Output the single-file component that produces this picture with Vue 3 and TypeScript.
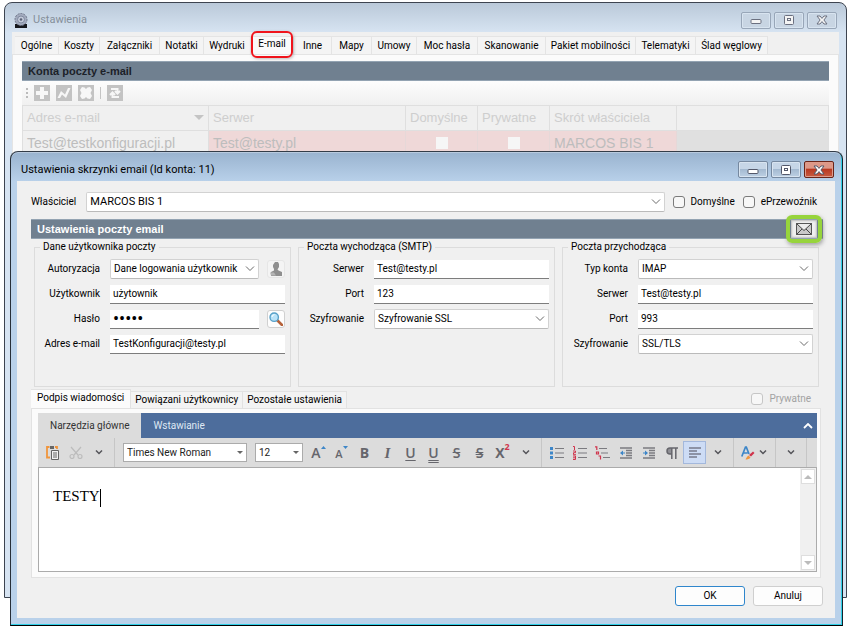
<script setup lang="ts">
import { ref } from 'vue'

interface Field {
  id: string
  label: string
  kind: 'text' | 'password' | 'select'
  value: string
  action?: 'user' | 'search'
}

interface Group {
  title: string
  fields: Field[]
}

const settingsTabs = [
  'Ogólne', 'Koszty', 'Załączniki', 'Notatki', 'Wydruki', 'E-mail', 'Inne',
  'Mapy', 'Umowy', 'Moc hasła', 'Skanowanie', 'Pakiet mobilności', 'Telematyki', 'Ślad węglowy',
]
const activeTab = ref('E-mail')

const groups = ref<Group[]>([
  {
    title: 'Dane użytkownika poczty',
    fields: [
      { id: 'auth', label: 'Autoryzacja', kind: 'select', value: 'Dane logowania użytkownik', action: 'user' },
      { id: 'user', label: 'Użytkownik', kind: 'text', value: 'użytownik' },
      { id: 'pass', label: 'Hasło', kind: 'password', value: '12345', action: 'search' },
      { id: 'mail', label: 'Adres e-mail', kind: 'text', value: 'TestKonfiguracji@testy.pl' },
    ],
  },
  {
    title: 'Poczta wychodząca (SMTP)',
    fields: [
      { id: 'smtp-server', label: 'Serwer', kind: 'text', value: 'Test@testy.pl' },
      { id: 'smtp-port', label: 'Port', kind: 'text', value: '123' },
      { id: 'smtp-enc', label: 'Szyfrowanie', kind: 'select', value: 'Szyfrowanie SSL' },
    ],
  },
  {
    title: 'Poczta przychodząca',
    fields: [
      { id: 'in-type', label: 'Typ konta', kind: 'select', value: 'IMAP' },
      { id: 'in-server', label: 'Serwer', kind: 'text', value: 'Test@testy.pl' },
      { id: 'in-port', label: 'Port', kind: 'text', value: '993' },
      { id: 'in-enc', label: 'Szyfrowanie', kind: 'select', value: 'SSL/TLS' },
    ],
  },
])

const signatureTabs = ['Podpis wiadomości', 'Powiązani użytkownicy', 'Pozostałe ustawienia']
const activeSignatureTab = ref('Podpis wiadomości')
</script>

<template>
  <main class="desktop">
    <section class="window back">
      <header class="titlebar">
        <svg class="app-icon" width="14" height="15" viewBox="0 0 14 15">
          <rect x="1" y="11" width="12" height="4" fill="#15171c" />
          <circle cx="7" cy="6.500" r="6" fill="#a3abbe" stroke="#6c7488" stroke-dasharray="2 1" />
          <circle cx="7" cy="6.500" r="3.500" fill="#c3cad9" stroke="#808aa0" />
          <circle cx="7" cy="6.500" r="1.300" fill="#5c6478" />
        </svg>
        <h1>Ustawienia</h1>
        <div class="window-buttons">
          <button aria-label="Minimalizuj"><svg width="14" height="12" viewBox="0 0 14 12"><rect x="2" y="5.500" width="10" height="4" rx="1" fill="#f4f4f4" stroke="#6b7080" /></svg></button>
          <button aria-label="Maksymalizuj"><svg width="14" height="12" viewBox="0 0 14 12"><rect x="2.500" y="1.500" width="9" height="9" rx="1" fill="#f4f4f4" stroke="#6b7080" /><rect x="5.500" y="4.500" width="3" height="2" fill="none" stroke="#6b7080" /></svg></button>
          <button aria-label="Zamknij"><svg width="14" height="12" viewBox="0 0 14 12"><path d="M2 2h3l2 2.400L9 2h3L8.900 6 12 10H9L7 7.600 5 10H2L5.100 6z" fill="#f4f4f4" stroke="#6b7080" /></svg></button>
        </div>
      </header>
      <div class="client">
        <nav class="settings-tabs">
          <button
            v-for="tab in settingsTabs"
            :key="tab"
            :class="{ active: tab === activeTab }"
            @click="activeTab = tab"
          >{{ tab }}</button>
        </nav>
        <div class="accounts">
          <h2 class="section-bar">Konta poczty e-mail</h2>
          <div class="account-tools">
            <i class="grip"></i>
            <button disabled aria-label="Dodaj"><svg width="16" height="16" viewBox="0 0 16 16"><path d="M6 2h4v4h4v4h-4v4H6v-4H2V6h4z" fill="#f7f7f7" /></svg></button>
            <button disabled aria-label="Edytuj"><svg width="16" height="16" viewBox="0 0 16 16"><path d="M1.500 13L5 6l4 3.500L12 3h2.500L10 13 6 9.500 4 13z" fill="#f7f7f7" /></svg></button>
            <button disabled aria-label="Usuń"><svg width="16" height="16" viewBox="0 0 16 16"><path d="M4 2l2.500.500L8 4l1.500-1.500L12 2l2 3-1.500 3 1.500 3-2 3-2.500-.5L8 12l-1.500 1.500L4 14l-2-3 1.500-3L2 5z" fill="#f7f7f7" /></svg></button>
            <i class="divider"></i>
            <button disabled aria-label="Odśwież"><svg width="16" height="16" viewBox="0 0 16 16"><path d="M4 4h6.500v4M13 6l-2.500 2.500L8 6M12 12H5.500V8M3 10l2.500-2.500L8 10" fill="none" stroke="#f7f7f7" stroke-width="2" /></svg></button>
          </div>
          <table>
            <colgroup>
              <col class="c-address" /><col class="c-server" /><col class="c-flag" /><col class="c-flag" /><col class="c-owner" /><col />
            </colgroup>
            <thead>
              <tr>
                <th><span class="sorted">Adres e-mail <svg width="10" height="6" viewBox="0 0 10 6"><path d="M0 0h10L5 5z" fill="#c4c4c4" /></svg></span></th>
                <th>Serwer</th><th>Domyślne</th><th>Prywatne</th><th>Skrót właściciela</th><th></th>
              </tr>
            </thead>
            <tbody>
              <tr>
                <td>Test@testkonfiguracji.pl</td>
                <td class="marked">Test@testy.pl</td>
                <td class="marked flag"><input type="checkbox" disabled aria-label="Domyślne" /></td>
                <td class="marked flag"><input type="checkbox" disabled aria-label="Prywatne" /></td>
                <td class="marked">MARCOS BIS 1</td>
                <td class="rest"></td>
              </tr>
            </tbody>
          </table>
        </div>
      </div>
    </section>

    <section class="window dialog">
      <header class="titlebar">
        <h1>Ustawienia skrzynki email (Id konta: 11)</h1>
        <div class="window-buttons">
          <button aria-label="Minimalizuj"><svg width="14" height="12" viewBox="0 0 14 12"><rect x="2" y="5.500" width="10" height="4" rx="1" fill="#fff" stroke="#53586a" /></svg></button>
          <button aria-label="Maksymalizuj"><svg width="14" height="12" viewBox="0 0 14 12"><rect x="2.500" y="1.500" width="9" height="9" rx="1" fill="#fff" stroke="#53586a" /><rect x="5.500" y="4.500" width="3" height="2" fill="none" stroke="#53586a" /></svg></button>
          <button class="close" aria-label="Zamknij"><svg width="14" height="12" viewBox="0 0 14 12"><path d="M2 2h3l2 2.400L9 2h3L8.900 6 12 10H9L7 7.600 5 10H2L5.100 6z" fill="#fff" stroke="#53586a" /></svg></button>
        </div>
      </header>

      <form class="client" @submit.prevent>
        <div class="owner">
          <label for="owner">Właściciel</label>
          <span class="select">
            <select id="owner"><option>MARCOS BIS 1</option></select>
            <svg width="10" height="6" viewBox="0 0 10 6"><path d="M1 .5l4 4 4-4" /></svg>
          </span>
          <label class="check"><input type="checkbox" />Domyślne</label>
          <label class="check"><input type="checkbox" />ePrzewoźnik</label>
        </div>

        <div class="section-bar mail-bar">
          <h2>Ustawienia poczty email</h2>
          <button class="send" aria-label="Wyślij wiadomość testową">
            <svg width="16" height="12" viewBox="0 0 16 12">
              <rect x=".5" y=".5" width="15" height="11" fill="#c9c9c9" stroke="#555" />
              <path d="M1 1l7 6.500L15 1z" fill="#ececec" />
              <path d="M1 1l7 6.500L15 1M1 11l5-5M15 11l-5-5" fill="none" stroke="#444" />
            </svg>
          </button>
        </div>

        <div class="groups">
          <fieldset v-for="group in groups" :key="group.title">
            <legend>{{ group.title }}</legend>
            <div v-for="field in group.fields" :key="field.id" class="field">
              <label :for="field.id">{{ field.label }}</label>
              <span v-if="field.kind === 'select'" class="select">
                <select :id="field.id"><option>{{ field.value }}</option></select>
                <svg width="10" height="6" viewBox="0 0 10 6"><path d="M1 .5l4 4 4-4" /></svg>
              </span>
              <input v-else :id="field.id" v-model="field.value" :type="field.kind" autocomplete="off" />
              <button v-if="field.action === 'user'" type="button" class="side muted" aria-label="Użytkownik">
                <svg width="12" height="14" viewBox="0 0 12 14">
                  <path d="M5 0h3l1 2v3L7.500 7.500l1 1L12 10v4H1v-4l3-1.500V7L3 5V3z" fill="#8f8f8f" />
                  <path d="M0 10.500h4l2 3H1z" fill="#b5b5b5" />
                </svg>
              </button>
              <button v-if="field.action === 'search'" type="button" class="side" aria-label="Pokaż hasło">
                <svg width="14" height="14" viewBox="0 0 14 14">
                  <path d="M8 8l5 5" stroke="#b5623a" stroke-width="2.600" stroke-linecap="round" />
                  <circle cx="5.200" cy="5.200" r="4.200" fill="#b9e2f8" stroke="#58a0c8" stroke-width="1.400" />
                  <path d="M3 5a2.500 2.500 0 0 1 2.500-2.300" fill="none" stroke="#fff" />
                </svg>
              </button>
            </div>
          </fieldset>
        </div>

        <div class="signature">
          <div class="signature-head">
            <nav class="signature-tabs">
              <button
                v-for="tab in signatureTabs"
                :key="tab"
                type="button"
                :class="{ active: tab === activeSignatureTab }"
                @click="activeSignatureTab = tab"
              >{{ tab }}</button>
            </nav>
            <label class="check disabled"><input type="checkbox" disabled />Prywatne</label>
          </div>

          <div class="panel">
            <div class="ribbon">
              <button type="button" class="active">Narzędzia główne</button>
              <button type="button">Wstawianie</button>
              <button type="button" class="collapse" aria-label="Zwiń"><svg width="10" height="6" viewBox="0 0 10 6"><path d="M1 5l4-4 4 4" fill="none" stroke="#fff" stroke-width="1.800" /></svg></button>
            </div>
            <div class="toolbar">
              <div class="tools">
                <button type="button" aria-label="Wklej">
                  <svg width="14" height="15" viewBox="0 0 14 15">
                    <path d="M3.500 2H1v10.500h3M9 2h2v2" fill="none" stroke="#f0953c" stroke-width="1.800" />
                    <path d="M4 1h4v3H4z" fill="#666" />
                    <path d="M5.500 5.500h7v9h-7z" fill="#f3f3f3" stroke="#666" />
                    <path d="M7 8h4M7 10h4M7 12h4" stroke="#666" />
                  </svg>
                </button>
                <button type="button" aria-label="Wytnij">
                  <svg width="14" height="13" viewBox="0 0 14 13" fill="none" stroke="#bcbcbc" stroke-width="1.200">
                    <path d="M2 1l7 8M12 1L5 9" /><circle cx="3" cy="10.500" r="2" /><circle cx="11" cy="10.500" r="2" />
                  </svg>
                </button>
                <button type="button" aria-label="Więcej"><svg class="more" width="8" height="5" viewBox="0 0 8 5"><path d="M1 .5l3 3 3-3" /></svg></button>
              </div>
              <div class="tools fonts">
                <span class="select flat family">
                  <select aria-label="Czcionka"><option>Times New Roman</option></select>
                  <svg width="6" height="4" viewBox="0 0 6 4"><path d="M0 0h6L3 3z" /></svg>
                </span>
                <span class="select flat size">
                  <select aria-label="Rozmiar"><option>12</option></select>
                  <svg width="6" height="4" viewBox="0 0 6 4"><path d="M0 0h6L3 3z" /></svg>
                </span>
                <div class="styles">
                  <button type="button" class="glyph" aria-label="Powiększ"><span>A</span><svg class="hint" width="5" height="3" viewBox="0 0 5 3"><path d="M0 3L2.500 0 5 3z" /></svg></button>
                  <button type="button" class="glyph small" aria-label="Pomniejsz"><span>A</span><svg class="hint" width="5" height="3" viewBox="0 0 5 3"><path d="M0 0h5L2.500 3z" /></svg></button>
                  <button type="button" class="glyph bold">B</button>
                  <button type="button" class="glyph italic">I</button>
                  <button type="button" class="glyph under">U</button>
                  <button type="button" class="glyph under double">U</button>
                  <button type="button" class="glyph strike">S</button>
                  <button type="button" class="glyph strike double">S</button>
                  <button type="button" class="glyph super"><span>X</span><sup>2</sup></button>
                  <button type="button" aria-label="Więcej"><svg class="more" width="8" height="5" viewBox="0 0 8 5"><path d="M1 .5l3 3 3-3" /></svg></button>
                </div>
              </div>
              <div class="tools">
                <button type="button" aria-label="Punktory">
                  <svg width="14" height="12" viewBox="0 0 14 12">
                    <path d="M5 1.500h9M5 6h9M5 10.500h9" stroke="#7b7b80" />
                    <path d="M0 0h3v3H0zM0 4.500h3v3H0zM0 9h3v3H0z" fill="#3d86c8" />
                  </svg>
                </button>
                <button type="button" aria-label="Numeracja">
                  <svg width="14" height="14" viewBox="0 0 14 14">
                    <path d="M5 2.500h9M5 7h9M5 11.500h9" stroke="#7b7b80" />
                    <path d="M0 .5h1.500V4M0 5h2.500v1.700H.5v2H3M0 10h2.500v3.500H0M0 11.800h2.500" fill="none" stroke="#d0344c" />
                  </svg>
                </button>
                <button type="button" aria-label="Lista wielopoziomowa">
                  <svg width="15" height="14" viewBox="0 0 15 14">
                    <path d="M4 2.500h8M6 7h7M8 11.500h7" stroke="#7b7b80" />
                    <path d="M0 .8h1.800V4M1.500 6h2v2h-2zM3.500 10h2v3.500" fill="none" stroke="#d0344c" stroke-width="1.200" />
                  </svg>
                </button>
                <button type="button" aria-label="Zmniejsz wcięcie">
                  <svg width="12" height="12" viewBox="0 0 12 12">
                    <path d="M0 1h12M6 3.500h6M6 6h6M6 8.500h6M0 11h12" stroke="#7b7b80" stroke-width="1.300" />
                    <path d="M0 6l3-2.500v5zM3 5.500h2v1H3z" fill="#3d86c8" />
                  </svg>
                </button>
                <button type="button" aria-label="Zwiększ wcięcie">
                  <svg width="12" height="12" viewBox="0 0 12 12">
                    <path d="M0 1h12M6 3.500h6M6 6h6M6 8.500h6M0 11h12" stroke="#7b7b80" stroke-width="1.300" />
                    <path d="M5 6L2 3.500v5zM0 5.500h2v1H0z" fill="#3d86c8" />
                  </svg>
                </button>
                <button type="button" aria-label="Znaki formatowania">
                  <svg width="12" height="12" viewBox="0 0 12 12">
                    <path d="M5.500 1H4a3 3 0 0 0 0 6h1.500z" fill="#8f8f95" />
                    <path d="M12 1H4a3 3 0 0 0 0 6h1.500M5.800 1v11M9.800 1v11" fill="none" stroke="#66666c" stroke-width="1.500" />
                  </svg>
                </button>
                <button type="button" class="pressed" aria-label="Wyrównaj do lewej">
                  <svg width="12" height="11" viewBox="0 0 12 11"><path d="M0 1h12M0 4h8M0 7h12M0 10h8" stroke="#77798a" stroke-width="1.300" /></svg>
                </button>
                <button type="button" aria-label="Więcej"><svg class="more" width="8" height="5" viewBox="0 0 8 5"><path d="M1 .5l3 3 3-3" /></svg></button>
              </div>
              <div class="tools">
                <button type="button" class="wide" aria-label="Edycja stylu">
                  <svg width="14" height="14" viewBox="0 0 14 14">
                    <path d="M.8 10.500L4.500 1h.8L8 8M2.200 7h4.500" fill="none" stroke="#3d86c8" stroke-width="1.700" />
                    <path d="M8 9l4-3.500 1.500 1.500L10 10.500z" fill="#d0344c" />
                    <path d="M7.500 9.500l2 2c-1 1.500-3 2-5 2 1-1 1-3 3-4z" fill="#f0953c" />
                  </svg>
                  <svg class="more" width="8" height="5" viewBox="0 0 8 5"><path d="M1 .5l3 3 3-3" /></svg>
                </button>
              </div>
              <div class="tools">
                <button type="button" aria-label="Więcej"><svg class="more" width="8" height="5" viewBox="0 0 8 5"><path d="M1 .5l3 3 3-3" /></svg></button>
              </div>
            </div>
            <div class="editor">
              <div class="page" contenteditable="true" role="textbox" aria-label="Podpis">TESTY<i class="caret"></i></div>
              <div class="scroll">
                <button type="button" aria-label="W górę"><svg width="8" height="4" viewBox="0 0 8 4"><path d="M0 4l4-4 4 4z" fill="#bbb" /></svg></button>
                <button type="button" aria-label="W dół"><svg width="8" height="4" viewBox="0 0 8 4"><path d="M0 0h8L4 4z" fill="#bbb" /></svg></button>
              </div>
            </div>
          </div>
        </div>

        <footer class="actions">
          <button type="submit" class="primary">OK</button>
          <button type="button">Anuluj</button>
        </footer>
      </form>
    </section>
  </main>
</template>

<style>
body {
  background: #fff;
}
</style>

<style scoped>
* {
  box-sizing: border-box;
}

.desktop {
  position: relative;
  padding: 151px 9px 4px 10px;
  min-height: 100vh;
  color: #000;
  font: 10px/14px Roboto, "Liberation Sans", sans-serif;
}

button,
input,
select {
  margin: 0;
  padding: 0;
  border: 0;
  background: none;
  color: inherit;
  font: inherit;
}

h1,
h2 {
  margin: 0;
  font-size: 11px;
  font-weight: 400;
}

.window {
  display: flex;
  flex-direction: column;
  border: 1px solid #3d4450;
  border-radius: 8px 8px 0 0;
}

.back {
  position: absolute;
  inset: 2px 5px 32px 4px;
  padding: 0 7px 7px;
  background: linear-gradient(#bac9d9, #d7e4f2 30px);
}

.dialog {
  position: relative;
  padding: 0 7px 7px 6px;
  border-color: #333c48 #14222c #000 #262e38;
  background: linear-gradient(#99b3cf, #b9d1ea 30px);
  box-shadow: inset -1px -1px #2fd0e8, inset 0 1px #b9cade;
}

.titlebar {
  display: flex;
  align-items: center;
  height: 29px;
  padding: 6px 1px 0 4px;
}

.titlebar h1 {
  flex: 1;
}

.back .titlebar {
  padding: 5px 2px 0 2px;
}

.back h1 {
  padding-left: 5px;
  color: #858f9a;
}

.window-buttons {
  display: flex;
  gap: 3px;
}

.window-buttons button {
  display: grid;
  place-items: center;
  width: 30px;
  height: 17px;
  border: 1px solid #75889f;
  border-radius: 2px;
  background: linear-gradient(#c6d6e7 45%, #a4bad1 50%, #bdd0e4);
  box-shadow: inset 0 0 0 1px #d8e4f0;
}

.back .window-buttons button {
  border-color: #98a6b8;
  background: #c8d5e3;
}

.window-buttons .close {
  border-color: #6a2418;
  background: linear-gradient(#dd9888 40%, #b93a22 50%, #c85c42);
  box-shadow: inset 0 0 0 1px #dd9c8c;
}

.client {
  flex: 1;
  background: #f0f0f0;
}

.back .client {
  display: flex;
  flex-direction: column;
  padding-top: 4px;
}

.settings-tabs {
  display: grid;
  grid-template-columns: 44px 41px 60px 44px 47px 43px 38px 40px 45px 61px 68px 90px 60px 72px;
  height: 18px;
  padding-left: 3px;
}

.settings-tabs button {
  border: 1px solid #e4e4e4;
  border-width: 1px 1px 0 0;
  background: #f4f4f4;
  white-space: nowrap;
}

.settings-tabs .active {
  position: relative;
  padding-bottom: 3px;
  background: #fafafa;
}

.settings-tabs .active::after {
  position: absolute;
  inset: -6px 0 -4px;
  border: 2px solid #f0141c;
  border-radius: 6px;
  box-shadow: 1px 1px 3px #8888;
  content: "";
}

.accounts {
  flex: 1;
  padding: 6px 9px 0;
  border: 1px solid #e4e4e4;
  background: #fbfbfb;
}

.section-bar {
  height: 20px;
  padding: 0 6px;
  border: 1px solid #93a3b2;
  border-width: 1px 0;
  background: #708090;
  color: #1c2128;
  font: bold 11px/18px "Liberation Sans", sans-serif;
}

.account-tools {
  display: flex;
  align-items: center;
  gap: 6px;
  height: 24px;
  padding-left: 4px;
  background: linear-gradient(#fdfdfd, #f0f0f0);
}

.account-tools button {
  display: flex;
  background: #c3c3c3;
}

.grip {
  width: 2px;
  height: 10px;
  background: repeating-linear-gradient(#bbb 0 2px, transparent 2px 4px);
}

.divider {
  width: 1px;
  height: 12px;
  background: #c4c4c4;
}

table {
  width: 100%;
  table-layout: fixed;
  border-collapse: collapse;
  background: #e0e0e0;
  color: #bdbdbd;
  font: 14px/16px "Liberation Sans", sans-serif;
}

.c-address { width: 186px; }
.c-server { width: 197px; }
.c-flag { width: 72px; }
.c-owner { width: 127px; }

th,
td {
  height: 25px;
  padding: 0 4px;
  border: 1px solid #dfdfdf;
  background: #f0f0f0;
  text-align: left;
  white-space: nowrap;
}

th {
  color: #cecece;
  font-size: 13px;
  font-weight: 400;
}

.sorted {
  display: flex;
  align-items: center;
  justify-content: space-between;
}

td.marked {
  border-color: #e6d8d8;
  background: #efd8d8;
}

td.rest {
  background: #e0e0e0;
}

td.flag {
  text-align: center;
}

td input {
  display: block;
  width: 12px;
  height: 12px;
  margin: auto;
  appearance: none;
  background: #f6f6f6;
}

.dialog .client {
  padding: 11px 12px 12px 14px;
}

.owner {
  display: flex;
  align-items: center;
  gap: 8px;
  height: 20px;
}

.owner .select {
  flex: 1;
  margin-left: 2px;
  font-size: 11px;
}

.owner .check:last-child {
  padding-right: 6px;
}

.select {
  display: grid;
  align-items: center;
  min-width: 0;
  height: 20px;
}

.select select,
.select svg {
  grid-area: 1 / 1;
}

.select select {
  width: 100%;
  height: 100%;
  padding: 0 16px 0 3px;
  border: 1px solid #d2d2d2;
  border-bottom-color: #bababa;
  border-radius: 2px;
  appearance: none;
  background: #fff;
}

.select svg {
  justify-self: end;
  margin-right: 4px;
  fill: none;
  stroke: #6b6b6b;
  pointer-events: none;
}

.check {
  display: flex;
  align-items: center;
  gap: 6px;
}

.check input {
  width: 12px;
  height: 12px;
  border: 1px solid #7a7a7a;
  border-radius: 3px;
  appearance: none;
  background: #f7f7f7;
}

.check.disabled {
  padding-right: 12px;
  color: #a2a2a2;
}

.check.disabled input {
  border-color: #c6c6c6;
}

.mail-bar {
  display: flex;
  align-items: center;
  justify-content: space-between;
  margin-top: 7px;
  color: #fff;
}

.mail-bar h2 {
  font: inherit;
}

.send {
  position: relative;
  display: grid;
  place-items: center;
  width: 26px;
  height: 18px;
  background: #f0f0f0;
  box-shadow: inset 0 0 2px 1px #bbb;
}

.send::after {
  position: absolute;
  inset: -5px;
  border: 4px solid #97d43c;
  border-radius: 6px;
  box-shadow: 1px 2px 4px #777a;
  content: "";
}

.groups {
  display: grid;
  grid-template-columns: repeat(3, minmax(0, 1fr));
  gap: 7px;
  padding: 1px 4px 0 3px;
}

fieldset {
  min-width: 0;
  min-height: 147px;
  margin: 0;
  padding: 5px 5px 0 0;
  border: 1px solid #dcdcdc;
}

legend {
  margin-left: 5px;
  padding: 0 3px;
}

.field {
  display: flex;
  align-items: center;
  gap: 10px;
  height: 20px;
  margin-bottom: 5px;
}

.field label {
  flex: 0 0 65px;
  text-align: right;
  white-space: nowrap;
}

.field .select {
  flex: 1;
}

.field input {
  flex: 1;
  min-width: 0;
  height: 19px;
  padding: 0 3px;
  border-bottom: 1px solid #7d7d7d;
  background: #fff;
}

.field input[type="password"] {
  font-size: 18px;
}

.side {
  display: grid;
  place-items: center;
  width: 18px;
  height: 18px;
  margin-left: -2px;
  border: 1px solid #d0d0d0;
  border-radius: 3px;
  background: #fdfdfd;
}

.side.muted {
  border-color: #e6e6e6;
  background: #f4f4f4;
}

.signature-head {
  display: flex;
  align-items: center;
  justify-content: space-between;
  margin-top: 2px;
}

.signature-tabs {
  display: flex;
  align-items: flex-end;
}

.signature-tabs button {
  height: 17px;
  padding: 0 4px;
  border: 1px solid #e2e2e2;
  border-width: 1px 1px 0 0;
  background: #f3f3f3;
}

.signature-tabs .active {
  height: 19px;
  padding: 0 6px 2px;
  background: #fbfbfb;
}

.panel {
  margin-right: 2px;
  padding: 4px 3px 5px 6px;
  border: 1px solid #e2e2e2;
  background: #fbfbfb;
}

.ribbon {
  display: flex;
  height: 25px;
  background: #4d6d9c;
  color: #dfe8f4;
}

.ribbon button {
  padding: 0 12px;
}

.ribbon .active {
  background: #dcdcdc;
  color: #333;
}

.ribbon .collapse {
  margin-left: auto;
  padding: 0 4px;
}

.toolbar {
  display: flex;
  align-items: stretch;
  height: 29px;
  background: #dcdcdc;
  color: #66666c;
}

.tools {
  display: flex;
  align-items: center;
  padding: 0 4px 0 3px;
  border-right: 1px solid #c6c6c6;
}

.tools.fonts {
  gap: 8px;
  padding-left: 8px;
}

.styles {
  display: flex;
  margin-left: -4px;
}

.tools button {
  display: flex;
  align-items: center;
  justify-content: center;
  width: 23px;
  height: 23px;
}

.tools .pressed {
  border: 1px solid #a3b8dc;
  background: #cddcf5;
}

.tools .wide {
  gap: 4px;
  width: 34px;
}

.more {
  fill: none;
  stroke: #55555a;
  stroke-width: 1.5;
}

.select.flat {
  height: 19px;
  color: #222;
}

.family { width: 124px; }
.size { width: 48px; }

.select.flat select {
  border: 1px solid #ababab;
  border-radius: 0;
}

.select.flat svg {
  fill: #666;
  stroke: none;
}

.glyph {
  font: 600 14px/16px "Open Sans", sans-serif;
}

.glyph.small {
  font-size: 11px;
}

.glyph.small span {
  padding-top: 3px;
}

.glyph.bold {
  font-weight: 700;
}

.glyph.italic {
  font: italic 600 15px/16px "Liberation Serif", serif;
}

.glyph.under {
  text-decoration: underline;
  text-underline-offset: 2px;
}

.glyph.strike {
  text-decoration: line-through;
}

.glyph.double {
  text-decoration-style: double;
}

.hint {
  align-self: flex-start;
  margin-top: 5px;
  fill: #3d86c8;
}

.super {
  font-weight: 700;
}

.super sup {
  align-self: flex-start;
  color: #d0344c;
  font-size: 9px;
  line-height: 12px;
}

.editor {
  display: flex;
  min-height: 105px;
  border: 1px solid #ababab;
  background: #fff;
}

.page {
  flex: 1;
  padding: 18px 14px;
  outline: 0;
  color: #000;
  font: 15px/20px "Liberation Serif", serif;
}

.caret {
  display: inline-block;
  width: 1px;
  height: 18px;
  background: #000;
  vertical-align: middle;
}

.scroll {
  display: flex;
  flex-direction: column;
  justify-content: space-between;
  padding: 1px;
  background: #f0f0f0;
}

.scroll button {
  display: grid;
  place-items: center;
  width: 14px;
  height: 15px;
  border: 1px solid #dedede;
  background: #fff;
}

.actions {
  display: flex;
  justify-content: flex-end;
  gap: 8px;
  margin-top: 8px;
}

.actions button {
  width: 70px;
  height: 20px;
  border: 1px solid #cfcfcf;
  border-radius: 3px;
  background: #fdfdfd;
}

.actions .primary {
  border-color: #2f86cc;
}
</style>
